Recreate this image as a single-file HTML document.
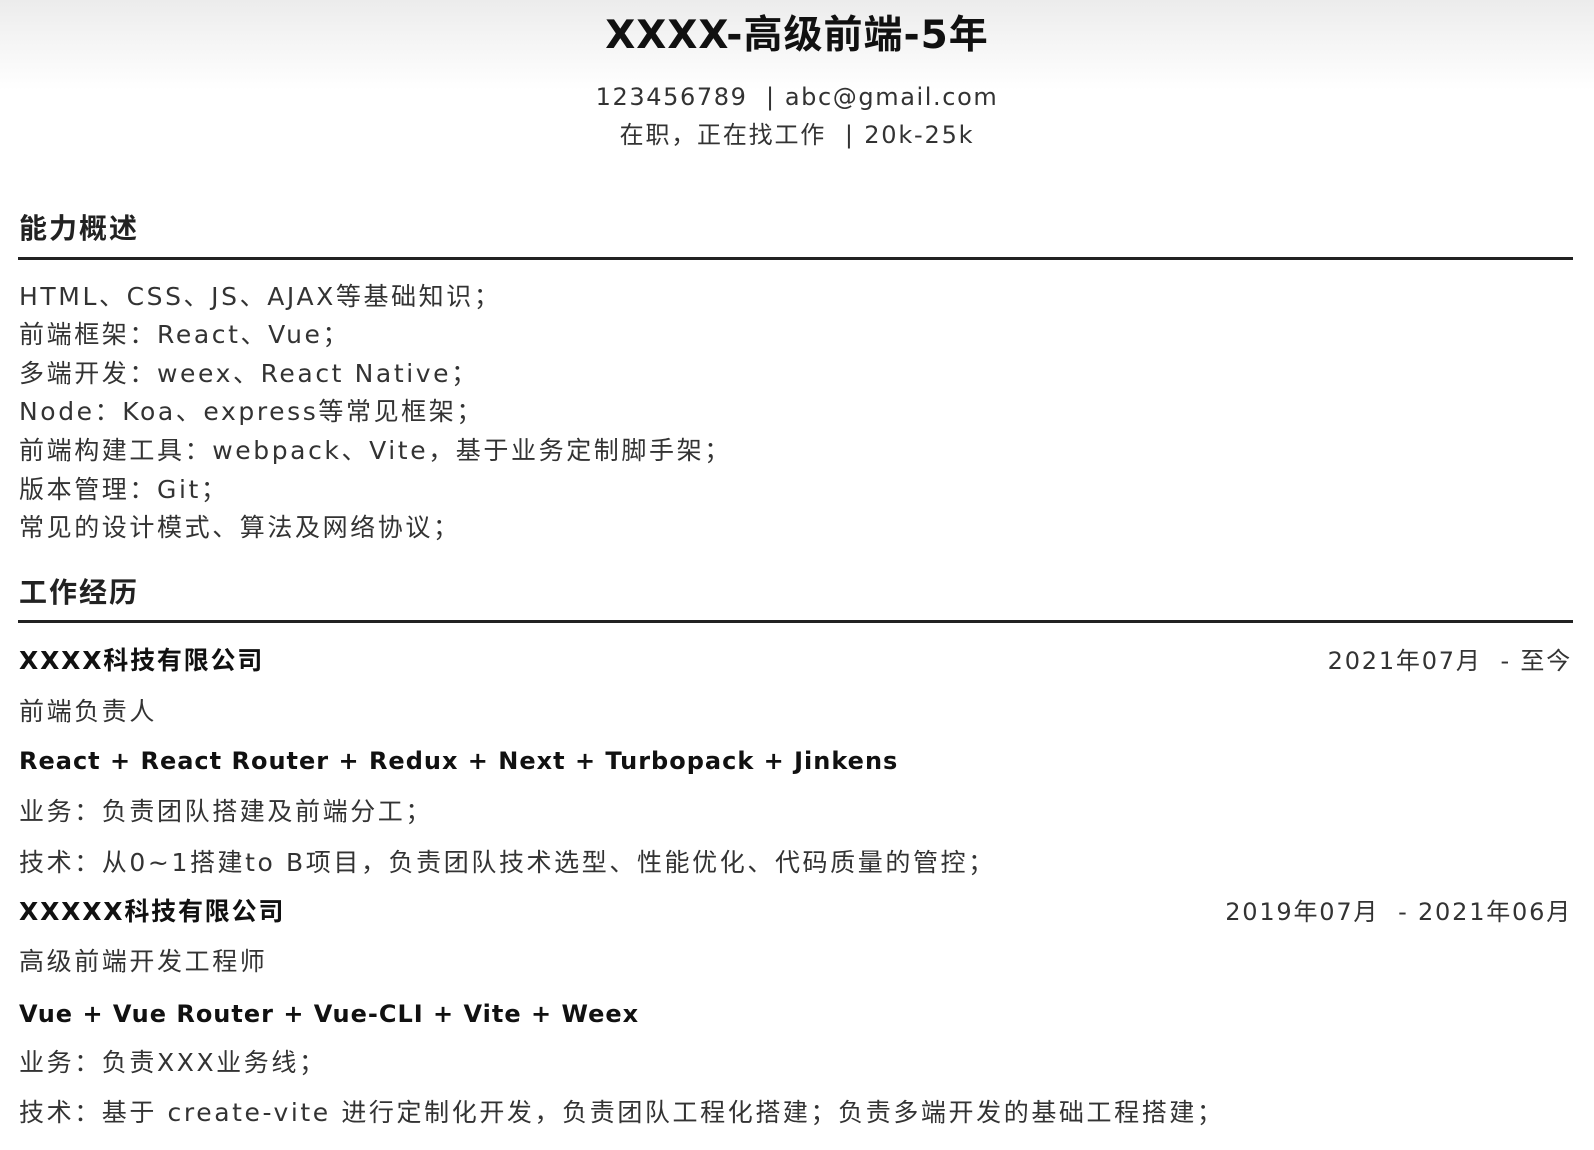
<!DOCTYPE html>
<html><head><meta charset="utf-8"><style>
html,body{margin:0;padding:0}
body{width:1594px;height:1150px;position:relative;overflow:hidden;background:#fff;font-family:"DejaVu Sans","Noto Sans CJK SC",sans-serif;color:#333}
.top{position:absolute;left:0;top:0;width:1594px;height:90px;background:linear-gradient(#ececec,#fff)}
.t{position:absolute;line-height:40px;height:40px;white-space:nowrap;font-size:25px;letter-spacing:2.6px}
.c{left:0;width:1594px;text-align:center}
.l{left:19px}
.r{right:22px}
.b{font-weight:bold;color:#111}
.h{font-size:28px;font-weight:bold;color:#222;letter-spacing:2px}
.hr{position:absolute;left:18px;width:1555px;height:3px;background:#222}
</style></head><body>
<div class="top"></div>
<div class="t c b" style="top:13px;font-size:39px;line-height:46px;height:46px;color:#111;letter-spacing:1px">XXXX-高级前端-5年</div>
<div class="t c" style="top:77px;font-size:24px;letter-spacing:1.6px">123456789 &nbsp;| abc@gmail.com</div>
<div class="t c" style="top:115px;font-size:24px;letter-spacing:1.8px">在职，正在找工作 &nbsp;| 20k-25k</div>

<div class="t l h" style="top:209px">能力概述</div>
<div class="hr" style="top:257px"></div>
<div class="t l" style="top:277px">HTML、CSS、JS、AJAX等基础知识；</div>
<div class="t l" style="top:315px">前端框架：React、Vue；</div>
<div class="t l" style="top:354px">多端开发：weex、React Native；</div>
<div class="t l" style="top:392px">Node：Koa、express等常见框架；</div>
<div class="t l" style="top:431px">前端构建工具：webpack、Vite，基于业务定制脚手架；</div>
<div class="t l" style="top:470px">版本管理：Git；</div>
<div class="t l" style="top:508px">常见的设计模式、算法及网络协议；</div>

<div class="t l h" style="top:573px">工作经历</div>
<div class="hr" style="top:620px"></div>
<div class="t l b" style="top:641px;letter-spacing:1.8px">XXXX科技有限公司</div>
<div class="t r" style="top:641px;font-size:24px;letter-spacing:1.8px">2021年07月 &nbsp;- 至今</div>
<div class="t l" style="top:692px">前端负责人</div>
<div class="t l b" style="top:741px;font-size:24px;letter-spacing:1px">React + React Router + Redux + Next + Turbopack + Jinkens</div>
<div class="t l" style="top:792px">业务：负责团队搭建及前端分工；</div>
<div class="t l" style="top:843px">技术：从0~1搭建to B项目，负责团队技术选型、性能优化、代码质量的管控；</div>
<div class="t l b" style="top:892px;letter-spacing:1.8px">XXXXX科技有限公司</div>
<div class="t r" style="top:892px;font-size:24px;letter-spacing:1.8px">2019年07月 &nbsp;- 2021年06月</div>
<div class="t l" style="top:942px">高级前端开发工程师</div>
<div class="t l b" style="top:994px;font-size:24px;letter-spacing:1px">Vue + Vue Router + Vue-CLI + Vite + Weex</div>
<div class="t l" style="top:1043px">业务：负责XXX业务线；</div>
<div class="t l" style="top:1093px">技术：基于 create-vite 进行定制化开发，负责团队工程化搭建；负责多端开发的基础工程搭建；</div>
</body></html>
